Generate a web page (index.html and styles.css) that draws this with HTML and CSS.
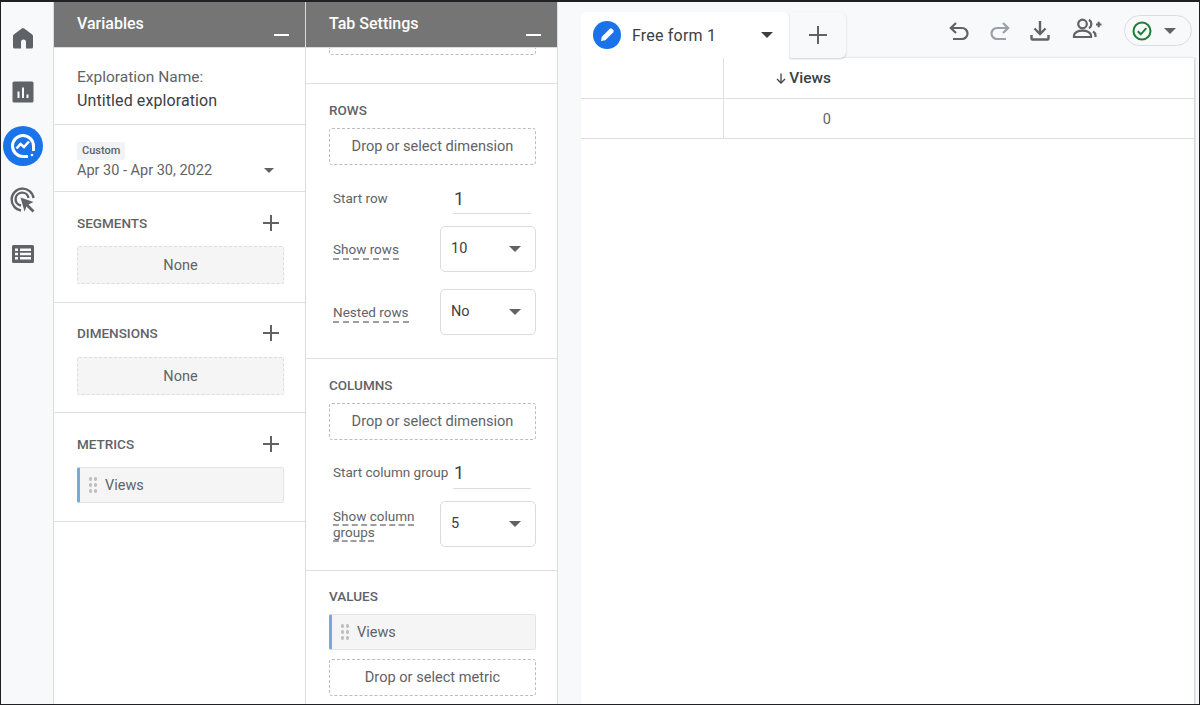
FILE: index.html
```html
<!DOCTYPE html>
<html lang="en">
<head>
    <meta charset="UTF-8">
    <meta name="viewport" content="width=device-width, initial-scale=1.0">
    <title>Exploration</title>
    <link rel="stylesheet" href="styles.css">
</head>
<body>
    <div class="frame">
        <nav class="rail">
            <div class="rail-item">
                <svg width="24" height="24" viewBox="0 0 24 24"><path class="ico-fill" d="M10.800 2.500a2 2 0 0 1 2.400 0l8 6a2 2 0 0 1 .8 1.600V21a1.500 1.500 0 0 1-1.500 1.500h-5.500v-6.500a2.500 2.500 0 0 0-5 0v6.500H3.500A1.500 1.500 0 0 1 2 21V10.100a2 2 0 0 1 .8-1.600z"/></svg>
            </div>
            <div class="rail-item">
                <svg width="24" height="24" viewBox="0 0 24 24"><path class="ico-fill" d="M3 1.500h18A1.500 1.500 0 0 1 22.500 3v18a1.500 1.500 0 0 1-1.500 1.500H3A1.500 1.500 0 0 1 1.500 21V3A1.500 1.500 0 0 1 3 1.500zM6.500 11.500v6.500h2v-6.500zm4.500-4V18h2V7.500zm4.500 7V18h2v-3.500z"/></svg>
            </div>
            <div class="rail-item">
                <div class="rail-active">
                    <svg width="28" height="28" viewBox="0 0 28 28" fill="none" stroke="#fff"><path stroke-width="3" d="M24.500 19V14A10.500 10.500 0 1 0 14 24.500h5"/><path stroke-width="2.600" d="M7.500 16.500l4-4.500 3.500 3 5-5.500"/><circle cx="23" cy="23" r="1.300" fill="#fff" stroke="none"/></svg>
                </div>
            </div>
            <div class="rail-item">
                <svg width="26" height="26" viewBox="0 0 26 26" fill="none" stroke="#5f6368" stroke-width="2.400"><path d="M11 23.500A11 11 0 1 1 23.500 11"/><path d="M11 18.500A6.500 6.500 0 1 1 18.500 11"/><path fill="#5f6368" stroke="none" d="M10.500 10.500l13 4.500-5 2.500 6 6-2 2-6-6-2 5z"/></svg>
            </div>
            <div class="rail-item">
                <svg width="24" height="24" viewBox="0 0 24 24"><path class="ico-fill" d="M2.500 3h19A1.500 1.500 0 0 1 23 4.500v15a1.500 1.500 0 0 1-1.500 1.500h-19A1.500 1.500 0 0 1 1 19.500v-15A1.500 1.500 0 0 1 2.500 3zM4 6.500v2.500h3V6.500zm5 0V9h11V6.500zM4 10.800v2.400h3v-2.400zm5 0v2.400h11v-2.400zM4 15v2.500h3V15zm5 0v2.500h11V15z"/></svg>
            </div>
        </nav>

        <section class="panel">
            <header class="panel-head"><span>Variables</span><i class="minimize"></i></header>
            <div class="block name-block">
                <div class="name-label">Exploration Name:</div>
                <div class="name-value">Untitled exploration</div>
            </div>
            <div class="block date-block">
                <span class="chip">Custom</span>
                <div class="date-row"><span>Apr 30 - Apr 30, 2022</span><i class="caret small"></i></div>
            </div>
            <div class="block var-block">
                <div class="var-head"><span class="label">SEGMENTS</span><i class="plus"></i></div>
                <div class="none-box">None</div>
            </div>
            <div class="block var-block">
                <div class="var-head"><span class="label">DIMENSIONS</span><i class="plus"></i></div>
                <div class="none-box">None</div>
            </div>
            <div class="block var-block">
                <div class="var-head"><span class="label">METRICS</span><i class="plus"></i></div>
                <div class="pill-item"><i class="grip"></i>Views</div>
            </div>
        </section>

        <section class="panel">
            <header class="panel-head"><span>Tab Settings</span><i class="minimize"></i></header>
            <div class="block cut-block"><div class="cut-box"></div></div>
            <div class="block set-block rows-block">
                <div class="label">ROWS</div>
                <div class="drop-box">Drop or select dimension</div>
                <div class="num-row"><span class="field-name">Start row</span><span class="num-input">1</span></div>
                <div class="sel-row"><span class="field-name dashed">Show rows</span><div class="select"><span>10</span><i class="caret"></i></div></div>
                <div class="sel-row"><span class="field-name dashed">Nested rows</span><div class="select"><span>No</span><i class="caret"></i></div></div>
            </div>
            <div class="block set-block cols-block">
                <div class="label">COLUMNS</div>
                <div class="drop-box">Drop or select dimension</div>
                <div class="num-row"><span class="field-name">Start column group</span><span class="num-input">1</span></div>
                <div class="sel-row"><span class="field-name dashed narrow">Show column groups</span><div class="select"><span>5</span><i class="caret"></i></div></div>
            </div>
            <div class="block set-block values-block">
                <div class="label">VALUES</div>
                <div class="pill-item"><i class="grip"></i>Views</div>
                <div class="drop-box">Drop or select metric</div>
            </div>
        </section>

        <main class="main">
            <div class="topbar">
                <div class="tab">
                    <span class="tab-badge">
                        <svg width="16" height="16" viewBox="0 0 16 16"><path fill="#fff" d="M10.800 1.700a1.500 1.500 0 0 1 2.100 0l1.400 1.400a1.500 1.500 0 0 1 0 2.100l-8 8L2 14l.8-4.300z"/></svg>
                    </span>
                    <span class="tab-name">Free form 1</span>
                    <i class="caret dark"></i>
                </div>
                <div class="tab-add"><i class="plus big"></i></div>
                <div class="tools">
                    <svg class="tool undo" width="24" height="24" viewBox="0 0 24 24" fill="none" stroke="#5f6368" stroke-width="2.200"><path d="M9 4 3.800 9 9 14"/><path d="M4 9h11a5.500 5.500 0 0 1 0 11H6"/></svg>
                    <svg class="tool redo" width="24" height="24" viewBox="0 0 24 24" fill="none" stroke="#9aa0a6" stroke-width="2.200"><path d="M15 4l5.200 5L15 14"/><path d="M20 9H9a5.500 5.500 0 0 0 0 11h9"/></svg>
                    <svg class="tool save" width="24" height="24" viewBox="0 0 24 24" fill="none" stroke="#5f6368" stroke-width="2.400"><path d="M12 2v12"/><path d="M6.500 9.500 12 15l5.500-5.500"/><path d="M3.500 16v3.500a1 1 0 0 0 1 1h15a1 1 0 0 0 1-1V16" /></svg>
                    <svg class="tool person" width="30" height="24" viewBox="0 0 30 24" fill="none" stroke="#5f6368" stroke-width="2.200"><circle cx="10.500" cy="7" r="4.300"/><path d="M2 20v-1.500c0-3 4-4.800 8.500-4.800s8.500 1.800 8.500 4.800V20z"/><path d="M17 2.800a5 5 0 0 1 0 8.500M21 14.500c1.500.9 2.500 2 2.500 4V20"/><path d="M24 7.500h5.500M26.700 4.700v5.600"/></svg>
                    <div class="status">
                        <svg width="20" height="20" viewBox="0 0 20 20" fill="none" stroke="#1e7e34" stroke-width="2"><circle cx="10" cy="10" r="8.500"/><path d="M5.800 10.300 8.800 13.300 14.300 7.200"/></svg>
                        <i class="caret"></i>
                    </div>
                </div>
            </div>
            <div class="report">
                <div class="table-row head-row">
                    <div class="cell-dim"></div>
                    <div class="cell-val"><svg class="sort-arrow" width="10" height="11" viewBox="0 0 10 11" fill="none" stroke="#3c4043" stroke-width="1.300"><path d="M5 .5v9.500"/><path d="M1 6l4 4 4-4"/></svg>Views</div>
                </div>
                <div class="table-row">
                    <div class="cell-dim"></div>
                    <div class="cell-val num">0</div>
                </div>
            </div>
        </main>
    </div>
</body>
</html>
```

FILE: styles.css
```css
* { box-sizing: border-box; }
html, body { margin: 0; height: 705px; overflow: hidden; }
body { font-family: Roboto, "Liberation Sans", sans-serif; font-size: 14px; color: #5f6368; background-color: #fff; }
i { display: block; font-style: normal; }

.frame { display: flex; height: 705px; border-top: 2px solid #202124; border-left: 1px solid #202124; border-right: 1px solid #202124; border-bottom: 1px solid #202124; overflow: hidden; }
.ico-fill { fill: #5f6368; }

/* left icon rail */
.rail { width: 53px; flex: none; padding: 9px 8px 0 0; background-color: #f8f9fa; border-right: 1px solid #dadce0; }
.rail-item { height: 54px; display: flex; align-items: center; justify-content: center; }
.rail-active { width: 40px; height: 40px; flex: none; border-radius: 50%; background-color: #1a73e8; display: flex; align-items: center; justify-content: center; }

/* variables + tab settings panels */
.panel { width: 252px; flex: none; background-color: #fff; border-right: 1px solid #dadce0; overflow: hidden; }
.panel-head { height: 46px; padding: 0 16px 0 23px; background-color: #757575; color: #fff; font-size: 16px; font-weight: 500; display: flex; justify-content: space-between; border-bottom: 1px solid #dadce0; }
.panel-head span { line-height: 44px; }
.minimize { width: 15px; height: 2px; margin-top: 32px; background-color: #fff; }

.block { border-bottom: 1px solid #e0e0e0; padding: 0 21px 0 23px; }
.name-block { height: 77px; padding-top: 18px; line-height: 23px; }
.name-label { font-size: 15.500px; }
.name-value { font-size: 16px; letter-spacing: .1px; color: #3c4043; }
.date-block { height: 67px; padding-top: 16px; }
.chip { display: inline-block; height: 18px; padding: 0 5px; font-size: 11px; font-weight: 500; line-height: 18px; background-color: #f1f3f4; border-radius: 2px; }
.date-row { display: flex; justify-content: space-between; align-items: center; padding-right: 10px; margin-top: 1px; line-height: 19px; font-size: 14.500px; }

.var-block { height: 110px; padding-top: 19px; }
.var-block:nth-child(4) { height: 111px; padding-top: 20px; }
.var-block:last-child { height: 109px; padding-top: 20px; }
.var-head { display: flex; justify-content: space-between; align-items: center; height: 22px; padding-right: 5px; margin-bottom: 13px; }
.var-block:nth-child(4) .var-head, .var-block:last-child .var-head { margin-bottom: 12px; }
.label { font-size: 13.500px; font-weight: 500; color: #5f6368; line-height: 20px; }

.plus { width: 16px; height: 16px; background: linear-gradient(#5f6368, #5f6368) center / 100% 2px no-repeat, linear-gradient(#5f6368, #5f6368) center / 2px 100% no-repeat; }
.plus.big { width: 18px; height: 18px; }
.caret { width: 0; height: 0; border-left: 6px solid transparent; border-right: 6px solid transparent; border-top: 6px solid #5f6368; flex: none; }
.caret.dark { border-top-color: #3c4043; }
.caret.small { border-left-width: 5px; border-right-width: 5px; border-top-width: 5px; }

.none-box { height: 38px; border: 1px dashed #dadce0; border-radius: 2px; background-color: #f5f5f5; text-align: center; line-height: 37px; font-size: 14.500px; }
.pill-item { height: 36px; display: flex; align-items: center; gap: 7px; padding-left: 8px; font-size: 14.500px; background-color: #f5f5f5; border: 1px solid #e4e4e4; border-left: 3px solid #7aa7dc; border-radius: 2px; }
.grip { width: 10px; height: 18px; background-image: radial-gradient(circle, #c0c0c0 1.600px, transparent 2px); background-size: 5px 6px; }

.cut-block { height: 36px; }
.cut-box { height: 7px; border: 1px dashed #bdbdbd; border-top: 0; border-radius: 0 0 3px 3px; }

.set-block .drop-box { height: 37px; border: 1px dashed #bdbdbd; border-radius: 3px; text-align: center; line-height: 35px; font-size: 14.600px; }
.rows-block { height: 275px; padding-top: 16px; }
.cols-block { height: 212px; padding-top: 16px; }
.values-block { height: 150px; padding-top: 15px; border-bottom: 0; }
.set-block .label { margin-bottom: 8px; }
.values-block .drop-box { margin-top: 9px; }

.num-row { display: flex; align-items: center; justify-content: space-between; height: 32px; margin-top: 17px; padding-left: 4px; }
.field-name { font-size: 13.500px; }
.num-input { width: 78px; height: 32px; border-bottom: 1px solid #dadce0; padding-left: 1px; margin-right: 5px; font-size: 18px; line-height: 34px; color: #3c4043; }
.cols-block .num-row .field-name { margin-top: -2px; }
.cols-block .num-input { line-height: 32px; }
.sel-row { display: flex; align-items: center; justify-content: space-between; margin-top: 17px; padding-left: 4px; }
.num-row + .sel-row { margin-top: 12px; }
.dashed { margin-top: 4px; padding-bottom: 1px; border-bottom: 2px dashed #9e9e9e; line-height: 15px; }
.dashed.narrow { width: 82px; margin-top: 0; padding-bottom: 0; line-height: 16px; border-bottom: 0; text-decoration: underline dashed #9e9e9e 2px; text-underline-offset: 3px; }
.select { width: 96px; height: 46px; border: 1px solid #dadce0; border-radius: 5px; display: flex; align-items: center; justify-content: space-between; padding: 0 14px 0 10px; font-size: 14.500px; color: #3c4043; }
.select span { margin-top: -2px; }

/* report area */
.main { flex: 1; min-width: 0; background-color: #f8f9fa; padding: 10px 5px 0 23px; }
.topbar { display: flex; height: 46px; }
.tab { width: 208px; background-color: #fff; border-radius: 6px 6px 0 0; display: flex; align-items: center; padding: 0 16px 0 12px; }
.tab-badge { width: 28px; height: 28px; border-radius: 50%; background-color: #1a73e8; display: flex; align-items: center; justify-content: center; flex: none; }
.tab-name { flex: 1; margin-left: 11px; font-size: 16px; color: #3c4043; letter-spacing: .2px; }
.tab-add { width: 56px; margin-left: 1px; border-radius: 0 6px 6px 0; background-color: #f8f9fa; box-shadow: 0 1px 2px rgba(60, 64, 67, .25); display: flex; align-items: center; justify-content: center; }
.tools { flex: 1; display: flex; align-items: center; justify-content: flex-end; padding-bottom: 9px; }
.undo { margin-right: 17px; }
.redo { margin-right: 16px; }
.save { margin-right: 20px; }
.person { margin-right: 22px; margin-top: -3px; }
.status { width: 68px; height: 31px; margin-right: 2px; border: 1px solid #dadce0; border-radius: 16px; display: flex; align-items: center; justify-content: space-between; padding: 0 15px 0 7px; }

.report { height: 647px; background-color: #fff; box-shadow: 1px 0 2px rgba(60, 64, 67, .25); }
.table-row { display: flex; height: 40px; border-bottom: 1px solid #e0e0e0; }
.head-row { height: 41px; }
.cell-dim { width: 143px; border-right: 1px solid #e0e0e0; }
.cell-val { width: 107px; text-align: right; line-height: 39px; font-size: 14.500px; color: #3c4043; }
.head-row .cell-val { font-weight: 500; font-size: 15.500px; line-height: 40px; }
.sort-arrow { margin-right: 3px; vertical-align: -1px; }
.num { color: #5f6368; line-height: 41px; }
```
